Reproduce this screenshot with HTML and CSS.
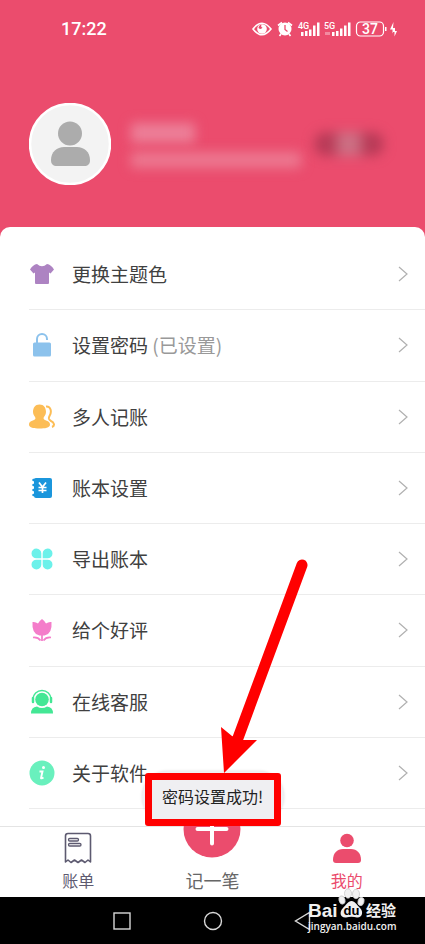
FILE: index.html
```html
<!DOCTYPE html>
<html lang="zh-CN">
<head>
<meta charset="utf-8">
<meta name="viewport" content="width=device-width, initial-scale=1">
<title>我的</title>
<link rel="stylesheet" href="styles.css">
</head>
<body>
<div class="app">
  <header class="header">
    <div class="status">
      <time class="clock">17:22</time>
      <svg class="status-icons" width="146" height="20" viewBox="0 0 146 20" fill="#fff" aria-hidden="true">
        <path d="M1 10Q10-1.500 19 10Q10 21.500 1 10Z" fill="none" stroke="#fff" stroke-width="1.600"/>
        <circle cx="10" cy="10" r="4.800"/><path d="M6.500 9a3.500 3.500 0 0 1 3-3.200q-1 2.500 1 2.700q-1.500 2.500-4 .5z" fill="#eb4c6d"/>
        <circle cx="33" cy="10" r="6.500"/><path d="M26 6.500l4-3M40 6.500l-4-3M29 15l-1.500 2M37 15l1.500 2" stroke="#fff" stroke-width="1.700"/><path d="M33 6v4.500l2.500 2" fill="none" stroke="#eb4c6d" stroke-width="1.300"/>
        <text x="46" y="10" class="net">4G</text>
        <path d="M49 13h2.500v4h-2.500zM53 12h2.500v5h-2.500zM57 10.500h2.500v6.500h-2.500zM61 6.500h2.500v10.500h-2.500zM65 3.500h2.500v13.500h-2.500z"/>
        <text x="72" y="10" class="net">5G</text>
        <path d="M73 13h5v3h-5z" opacity=".35"/>
        <path d="M80 13h2.500v4h-2.500zM84 12h2.500v5h-2.500zM88 9.500h2.500v7.500h-2.500zM92 6.500h2.500v10.500h-2.500zM96 3.500h2.500v13.500h-2.500z"/>
        <rect x="104.500" y="3" width="27" height="14" rx="4" fill="none" stroke="#fff" stroke-width="1.200"/>
        <rect x="133" y="8" width="1.500" height="4"/>
        <text x="118" y="15" text-anchor="middle" class="level">37</text>
        <path d="M141.500 3L138 10.500H140.500V14.500L143 9H141ZM143 8.500L140.500 13H142.500V17.500L145 12H143Z"/>
      </svg>
    </div>
    <div class="profile">
      <svg class="avatar" viewBox="0 0 82 82" aria-label="头像" role="img">
        <circle cx="41" cy="41" r="40" fill="#f3f3f3" stroke="#fff" stroke-width="2.500"/>
        <circle cx="41" cy="30.500" r="12" fill="#acacac"/>
        <path d="M22 57C22 49 28 44 35 44H48C55 44 61 49 61 57C61 61 59 63 55 63H28C24 63 22 61 22 57Z" fill="#acacac"/>
      </svg>
      <div class="identity"><div class="name-blur"></div><div class="note-blur"></div></div>
      <div class="badge-blur"></div>
    </div>
  </header>

  <main class="sheet">
    <ul class="menu">
      <li><a href="#theme"><svg class="icon" viewBox="0 0 26 26"><path d="M8 3Q13 7.500 18 3Q22 3.500 25 8.500L21.500 12.500L20 11.500V22Q20 23 19 23H7Q6 23 6 22V11.500L4.500 12.500L1 8.500Q4 3.500 8 3Z" fill="#ad83c2"/></svg><span>更换主题色</span><svg class="chevron" viewBox="0 0 10 16"><path d="M1 1l8 7-8 7"/></svg></a></li>
      <li><a href="#password"><svg class="icon" viewBox="0 0 26 26"><path d="M8 11V7A5 5 0 0 1 18 7V8" fill="none" stroke="#8cc2ec" stroke-width="2"/><rect x="4" y="10.500" width="18" height="14" rx="1.500" fill="#8cc2ec"/></svg><span>设置密码 <span class="state">(已设置)</span></span><svg class="chevron" viewBox="0 0 10 16"><path d="M1 1l8 7-8 7"/></svg></a></li>
      <li><a href="#people"><svg class="icon" viewBox="0 0 26 26"><path d="M17 2.500C22 2 23 8 20.500 12C19 15 20 16 22 17C25.500 18.500 26 22 23 23" fill="none" stroke="#fcbd56" stroke-width="2"/><path d="M10.500 .5C15 .5 17 4 17 8C17 11 15 12 14.500 14C14.500 17 21 16 21 20.500C21 24 16 24.500 10.500 24.500S0 24 0 20.500C0 16 6.500 17 6.500 14C6 12 4 11 4 8C4 4 6 .5 10.500 .5Z" fill="#fcbd56"/></svg><span>多人记账</span><svg class="chevron" viewBox="0 0 10 16"><path d="M1 1l8 7-8 7"/></svg></a></li>
      <li><a href="#book"><svg class="icon" viewBox="0 0 26 26"><rect x="5" y="3" width="18" height="20" rx="2" fill="#1b96dc"/><path d="M4.500 5h3M4.500 10h3M4.500 15h3M4.500 20h3" stroke="#1b96dc" stroke-width="2.500" stroke-linecap="round"/><path d="M10 7.500l3.500 4.500 3.500-4.500M13.500 12v6M9.500 12.500h8M9.500 15.500h8" fill="none" stroke="#fff" stroke-width="1.700"/></svg><span>账本设置</span><svg class="chevron" viewBox="0 0 10 16"><path d="M1 1l8 7-8 7"/></svg></a></li>
      <li><a href="#export"><svg class="icon" viewBox="0 0 26 26" fill="#6cf1ea"><path d="M12.300 12.300H7.500A4.900 4.900 0 1 1 12.300 7.500ZM13.700 12.300V7.500A4.900 4.900 0 1 1 18.500 12.300ZM12.300 13.700V18.500A4.900 4.900 0 1 1 7.500 13.700ZM13.700 13.700H18.500A4.900 4.900 0 1 1 13.700 18.500Z"/></svg><span>导出账本</span><svg class="chevron" viewBox="0 0 10 16"><path d="M1 1l8 7-8 7"/></svg></a></li>
      <li><a href="#review"><svg class="icon" viewBox="0 0 26 26"><path d="M13 2Q15.500 3.500 17 6.500Q19.500 4.500 22.500 5Q23.500 17 15.500 18.500H10.500Q2.500 17 3.500 5Q6.500 4.500 9 6.500Q10.500 3.500 13 2Z" fill="#f47dca"/><path d="M13 18v6M4 20.500q5-.5 7.500 3M22 20.500q-5-.5-7.500 3" fill="none" stroke="#f47dca" stroke-width="1.700"/></svg><span>给个好评</span><svg class="chevron" viewBox="0 0 10 16"><path d="M1 1l8 7-8 7"/></svg></a></li>
      <li><a href="#service"><svg class="icon" viewBox="0 0 26 26"><circle cx="13" cy="10.500" r="6.800" fill="#43e795"/><path d="M4 11V10A9 8.500 0 0 1 22 10V11" fill="none" stroke="#43e795" stroke-width="1.500"/><path d="M4 9v4M22 9v4" stroke="#43e795" stroke-width="2.500" stroke-linecap="round"/><path d="M2 24.500Q2 18 8 17.500Q13 20.500 18 17.500Q24 18 24 24.500Z" fill="#43e795"/></svg><span>在线客服</span><svg class="chevron" viewBox="0 0 10 16"><path d="M1 1l8 7-8 7"/></svg></a></li>
      <li><a href="#about"><svg class="icon" viewBox="0 0 26 26"><circle cx="13" cy="13" r="12.500" fill="#69f0bd"/><circle cx="14.500" cy="7.500" r="1.500" fill="#fff"/><path d="M10.500 11.500H13.500L12 18Q12 19 14.500 17.500" fill="none" stroke="#fff" stroke-width="1.900"/></svg><span>关于软件</span><svg class="chevron" viewBox="0 0 10 16"><path d="M1 1l8 7-8 7"/></svg></a></li>
    </ul>
  </main>

  <footer class="bottom">
    <nav class="tabs">
      <a class="tab" href="#bills"><svg width="28" height="32" viewBox="0 0 28 32" fill="none" stroke="#5d5a70" stroke-width="1.600"><path d="M1.500 30V4Q1.500 1.500 4 1.500H24Q26.500 1.500 26.500 4V30L24 28L21 30.500L17.500 28L14 30.500L10.500 28L7 30.500L4 28Z" stroke-linejoin="round"/><rect x="4.500" y="6.500" width="10" height="2.500" rx="1.200" stroke-width="1.300"/><rect x="4.500" y="11.500" width="12.500" height="2.500" rx="1.200" stroke-width="1.300"/></svg><span>账单</span></a>
      <a class="tab add" href="#add"><svg class="plus" width="58" height="58" viewBox="0 0 58 58"><circle cx="29" cy="29" r="28.500" fill="#eb4c6d"/><path d="M14.500 29H43.500M29 14.500V43.500" stroke="#fff" stroke-width="4" stroke-linecap="round"/></svg><span>记一笔</span></a>
      <a class="tab active" href="#me" aria-current="page"><svg width="28" height="32" viewBox="0 0 28 32" fill="#eb4c6d"><circle cx="14" cy="8.500" r="6.800"/><path d="M0 28C0 21 4 17 10 17H18C24 17 28 21 28 28Q28 31 25 31H3Q0 31 0 28Z"/></svg><span>我的</span></a>
    </nav>
    <div class="system">
      <button type="button" aria-label="最近任务"><svg viewBox="0 0 20 20"><rect x="2" y="2" width="16" height="16"/></svg></button>
      <button type="button" aria-label="主屏幕"><svg viewBox="0 0 20 20"><circle cx="10" cy="10" r="8.500"/></svg></button>
      <button type="button" aria-label="返回"><svg viewBox="0 0 20 20"><path d="M15.500 1.500V18.500L1.500 10Z"/></svg></button>
    </div>
    <div class="toast" role="status">密码设置成功!</div>
    <svg class="arrow" width="100" height="220" viewBox="0 0 100 220" fill="red" aria-hidden="true"><path d="M89 11L25 184" stroke="red" stroke-width="11" stroke-linecap="round"/><path d="M8 173L19 182L30 186H44L11 219Z"/></svg>
    <div class="highlight"></div>
    <svg class="watermark" width="92" height="56" viewBox="0 -10 92 56" fill="#f1f1f1">
      <text x="1" y="28" class="wm-logo">Bai</text>
      <g stroke="#c9c9c9" stroke-width=".8"><ellipse cx="35" cy="11" rx="3" ry="4.200" transform="rotate(-15 35 11)"/><ellipse cx="41" cy="4.500" rx="3.500" ry="4.700"/><ellipse cx="49" cy="5" rx="3.500" ry="4.700"/><ellipse cx="54" cy="12.500" rx="3" ry="4.200" transform="rotate(15 54 12.500)"/></g>
      <path d="M44.500 12C48 12 50 16 53 19C57 23 55 29 50 28.500Q44.500 27 39 28.500C33 29 32 23 36 19C39 16 41 12 44.500 12Z"/>
      <text x="44.500" y="26" text-anchor="middle" class="wm-du">du</text>
      <text x="59" y="27" class="wm-cn">经验</text>
      <text x="1" y="41" class="wm-url">jingyan.baidu.com</text>
    </svg>
  </footer>
</div>
</body>
</html>
```
FILE: styles.css
```css
* { box-sizing: border-box; }

body {
  margin: 0;
  background: #fff;
  color: #404040;
  font-family: "Noto Sans CJK SC", sans-serif;
}

a { color: inherit; text-decoration: none; }

.app {
  min-height: 100vh;
  display: flex;
  flex-direction: column;
}

.header {
  background: #eb4c6d;
  padding-bottom: 52px;
}

.status {
  display: flex;
  align-items: center;
  justify-content: space-between;
  height: 58px;
  padding: 0 27px 0 61px;
}

.clock {
  color: #fff;
  font: 500 18px/20px Roboto, sans-serif;
}

.net { font: 500 9px Roboto, sans-serif; }
.level { font: 500 14px Roboto, sans-serif; }

.profile {
  display: flex;
  align-items: center;
  padding: 45px 41px 0 29px;
}

.avatar { width: 82px; height: 82px; }

.identity {
  flex: 1;
  margin-left: 20px;
  padding-top: 2px;
}

.name-blur, .note-blur {
  background: #ec7f98;
  filter: blur(6px);
}

.name-blur { width: 64px; height: 20px; }
.note-blur { max-width: 170px; height: 16px; margin-top: 9px; background: #ec7890; }

.badge-blur {
  width: 70px;
  height: 24px;
  border-radius: 12px;
  background: linear-gradient(90deg, #b83a57 25%, #cc7084 40%, #cc7084 60%, #b83a57 75%);
  filter: blur(6px);
}

.sheet {
  flex: 1;
  display: flex;
  margin-top: -10px;
  padding: 12px 0 17px;
  background: #fff;
  border-radius: 10px 10px 0 0;
}

.menu {
  flex: 1;
  display: grid;
  grid-auto-rows: 1fr;
  margin: 0;
  padding: 0 0 0 29px;
  list-style: none;
}

.menu li { display: grid; border-bottom: 1px solid #ececec; }

.menu a {
  display: flex;
  align-items: center;
  gap: 17px;
  padding-right: 17px;
  font-size: 19px;
  line-height: 28px;
}

.menu a > span { flex: 1; }
.state { color: #999; }
.icon { width: 26px; height: 26px; }

.chevron {
  width: 10px;
  height: 16px;
  fill: none;
  stroke: #b0b0b0;
  stroke-width: 1.2;
}

.bottom { position: relative; }

.tabs {
  display: grid;
  grid-template: 100% / repeat(3, 1fr);
  height: 71px;
  padding: 0 11px;
  border-top: 1px solid #e4e4e4;
}

.tab {
  display: flex;
  flex-direction: column;
  align-items: center;
  justify-content: flex-end;
  gap: 4px;
  padding-bottom: 5px;
  color: #5d5a70;
  font-size: 16px;
  line-height: 24px;
}

.add { color: #666; font-size: 18px; gap: 10px; }
.plus { flex: none; }
.active { color: #eb4c6d; }

.system {
  display: grid;
  grid-template-columns: repeat(3, 91px);
  justify-content: center;
  height: 47px;
  background: #000;
}

.system button {
  padding: 0;
  border: 0;
  background: none;
}

.system svg {
  display: block;
  width: 20px;
  height: 20px;
  margin: 0 auto;
  fill: none;
  stroke: #d8d8d8;
  stroke-width: 1.4;
}

.toast {
  position: absolute;
  left: 50%;
  bottom: 122px;
  width: 142px;
  height: 51px;
  transform: translateX(-50%);
  border-radius: 25px;
  background: #efeff2;
  box-shadow: 0 0 3px #0002;
  color: #222;
  font-size: 16px;
  line-height: 51px;
  text-align: center;
  white-space: nowrap;
}

.highlight {
  position: absolute;
  left: 50%;
  bottom: 118px;
  width: 136px;
  height: 53px;
  transform: translateX(-50%);
  border: 7px solid red;
  border-radius: 3px;
}

.arrow {
  position: absolute;
  left: 50%;
  bottom: 170px;
  pointer-events: none;
}

.watermark {
  position: absolute;
  right: 26px;
  bottom: 9px;
}

.wm-logo { font: 700 19px "Liberation Sans", sans-serif; }
.wm-du { font: 700 13px "Liberation Sans", sans-serif; fill: #000; }
.wm-cn { font: 700 15px "Noto Sans CJK SC", sans-serif; }
.wm-url { font: 600 10px "Open Sans", sans-serif; }
```
